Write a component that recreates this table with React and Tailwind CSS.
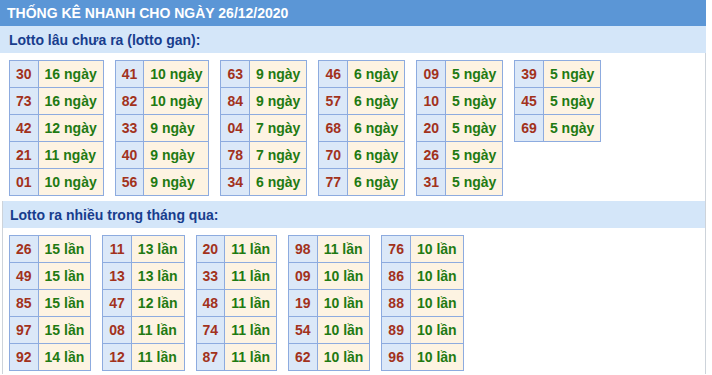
import React from "react";

const gan = [
  [["30", "16"], ["73", "16"], ["42", "12"], ["21", "11"], ["01", "10"]],
  [["41", "10"], ["82", "10"], ["33", "9"], ["40", "9"], ["56", "9"]],
  [["63", "9"], ["84", "9"], ["04", "7"], ["78", "7"], ["34", "6"]],
  [["46", "6"], ["57", "6"], ["68", "6"], ["70", "6"], ["77", "6"]],
  [["09", "5"], ["10", "5"], ["20", "5"], ["26", "5"], ["31", "5"]],
  [["39", "5"], ["45", "5"], ["69", "5"]],
];

const nhieu = [
  [["26", "15"], ["49", "15"], ["85", "15"], ["97", "15"], ["92", "14"]],
  [["11", "13"], ["13", "13"], ["47", "12"], ["08", "11"], ["12", "11"]],
  [["20", "11"], ["33", "11"], ["48", "11"], ["74", "11"], ["87", "11"]],
  [["98", "11"], ["09", "10"], ["19", "10"], ["54", "10"], ["62", "10"]],
  [["76", "10"], ["86", "10"], ["88", "10"], ["89", "10"], ["96", "10"]],
];

function Table({ rows, unit }) {
  return (
    <div className="grid grid-cols-[auto_auto] self-start border-t border-l border-[#8dabdf]">
      {rows.map(([n, v]) => (
        <React.Fragment key={n}>
          <div className="h-[27px] px-[6px] flex items-center justify-center border-r border-b border-[#8dabdf] bg-[#dbe8f8] text-[#a2321c]">
            {n}
          </div>
          <div className="h-[27px] px-[6px] flex items-center border-r border-b border-[#8dabdf] bg-[#fdf3e2] text-[#1f7a12]">
            {v} {unit}
          </div>
        </React.Fragment>
      ))}
    </div>
  );
}

export default function App() {
  return (
    <div className="w-[706px] bg-white font-['Liberation_Sans',Arial,sans-serif] text-[14px] font-bold leading-[16px]">
      <div className="h-[26px] flex items-center pl-[7px] bg-[#5b96d6] text-white">
        THỐNG KÊ NHANH CHO NGÀY 26/12/2020
      </div>
      <div className="h-[27px] flex items-center pl-[9px] bg-[#d4e6f9] text-[#183d8d]">
        Lotto lâu chưa ra (lotto gan):
      </div>
      <div className="flex gap-[11px] pl-[9px] pt-[7px] pb-[5px] border-r border-[#cdd3da]">
        {gan.map((t, i) => (
          <Table key={i} rows={t} unit="ngày" />
        ))}
      </div>
      <div className="ml-[2px] border-l border-r border-[#cdd3da] pb-[3px]">
        <div className="h-[27px] flex items-center pl-[7px] bg-[#d4e6f9] text-[#183d8d]">
          Lotto ra nhiều trong tháng qua:
        </div>
        <div className="flex gap-[11px] pl-[6px] pt-[7px]">
          {nhieu.map((t, i) => (
            <Table key={i} rows={t} unit="lần" />
          ))}
        </div>
      </div>
    </div>
  );
}
